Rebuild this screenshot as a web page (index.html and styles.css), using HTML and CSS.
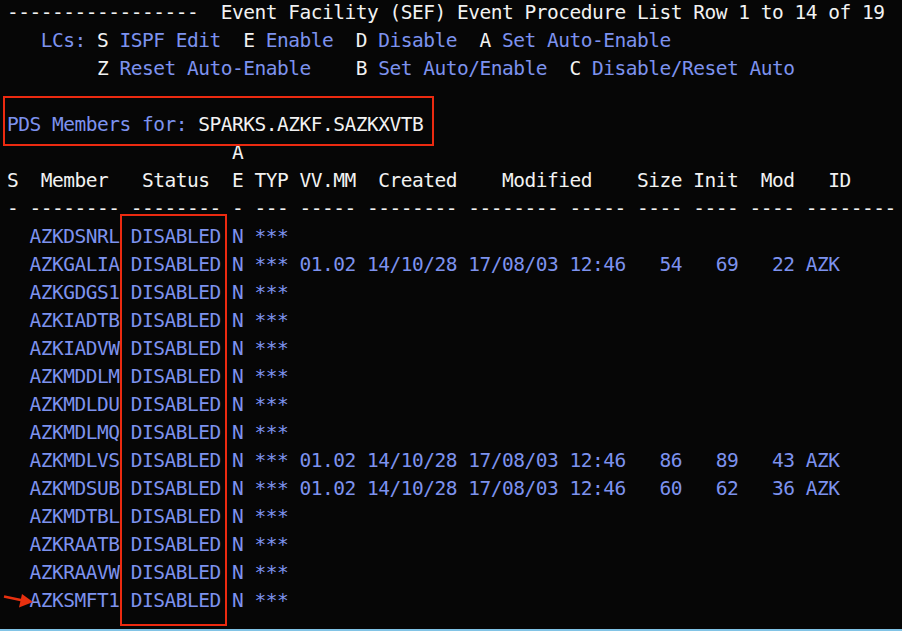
FILE: index.html
```html
<!DOCTYPE html>
<html>
<head>
<meta charset="utf-8">
<link rel="stylesheet" href="styles.css">
</head>
<body>
<div class="screen">
  <div class="lines">
    <div class="ln w">-----------------  Event Facility (SEF) Event Procedure List Row 1 to 14 of 19</div>
    <div class="ln">   <span class="b">LCs:</span> <span class="w">S</span> <span class="b">ISPF Edit</span>  <span class="w">E</span> <span class="b">Enable</span>  <span class="w">D</span> <span class="b">Disable</span>  <span class="w">A</span> <span class="b">Set Auto-Enable</span></div>
    <div class="ln">        <span class="w">Z</span> <span class="b">Reset Auto-Enable</span>    <span class="w">B</span> <span class="b">Set Auto/Enable</span>  <span class="w">C</span> <span class="b">Disable/Reset Auto</span></div>
    <div class="ln"> </div>
    <div class="ln"><span class="b">PDS Members for:</span> <span class="w">SPARKS.AZKF.SAZKXVTB</span></div>
    <div class="ln w">                    A</div>
    <div class="ln w">S  Member   Status  E TYP VV.MM  Created    Modified    Size Init  Mod   ID</div>
    <div class="ln w">- -------- -------- - --- ----- -------- -------- ----- ---- ---- ---- --------</div>
    <div class="ln b">  AZKDSNRL DISABLED N ***</div>
    <div class="ln b">  AZKGALIA DISABLED N *** 01.02 14/10/28 17/08/03 12:46   54   69   22 AZK</div>
    <div class="ln b">  AZKGDGS1 DISABLED N ***</div>
    <div class="ln b">  AZKIADTB DISABLED N ***</div>
    <div class="ln b">  AZKIADVW DISABLED N ***</div>
    <div class="ln b">  AZKMDDLM DISABLED N ***</div>
    <div class="ln b">  AZKMDLDU DISABLED N ***</div>
    <div class="ln b">  AZKMDLMQ DISABLED N ***</div>
    <div class="ln b">  AZKMDLVS DISABLED N *** 01.02 14/10/28 17/08/03 12:46   86   89   43 AZK</div>
    <div class="ln b">  AZKMDSUB DISABLED N *** 01.02 14/10/28 17/08/03 12:46   60   62   36 AZK</div>
    <div class="ln b">  AZKMDTBL DISABLED N ***</div>
    <div class="ln b">  AZKRAATB DISABLED N ***</div>
    <div class="ln b">  AZKRAAVW DISABLED N ***</div>
    <div class="ln b">  AZKSMFT1 DISABLED N ***</div>
  </div>
  <div class="mark mark-pds"></div>
  <div class="mark mark-status"></div>
  <svg class="arrow" width="31" height="17" viewBox="0 0 31 17">
    <line x1="1" y1="4.5" x2="20" y2="8.5" stroke="#e8300f" stroke-width="2.4"/>
    <polygon points="19,2 30,10 16,15.5" fill="#e8300f"/>
  </svg>
</div>
</body>
</html>
```

FILE: styles.css
```css
html, body {
  margin: 0;
  padding: 0;
  background: #060606;
}
.screen {
  position: relative;
  width: 902px;
  height: 629px;
  overflow: hidden;
  background: #060606;
  border-bottom: 2px solid #82c4e6;
}
.lines {
  margin-top: -1px;
  padding-left: 7px;
  font-family: "DejaVu Sans Mono", monospace;
  font-size: 19.5px;
  letter-spacing: -0.49px;
  line-height: 28px;
}
.ln {
  white-space: pre;
  height: 28px;
}
.w { color: #f2f2f2; }
.b { color: #7d92ee; }
.mark {
  position: absolute;
  border: 2px solid #ec2a10;
  box-sizing: border-box;
}
.mark-pds {
  left: 3px;
  top: 96px;
  width: 431px;
  height: 50px;
}
.mark-status {
  left: 120px;
  top: 214px;
  width: 107px;
  height: 412px;
}
.arrow {
  position: absolute;
  left: 3px;
  top: 592px;
}
```
